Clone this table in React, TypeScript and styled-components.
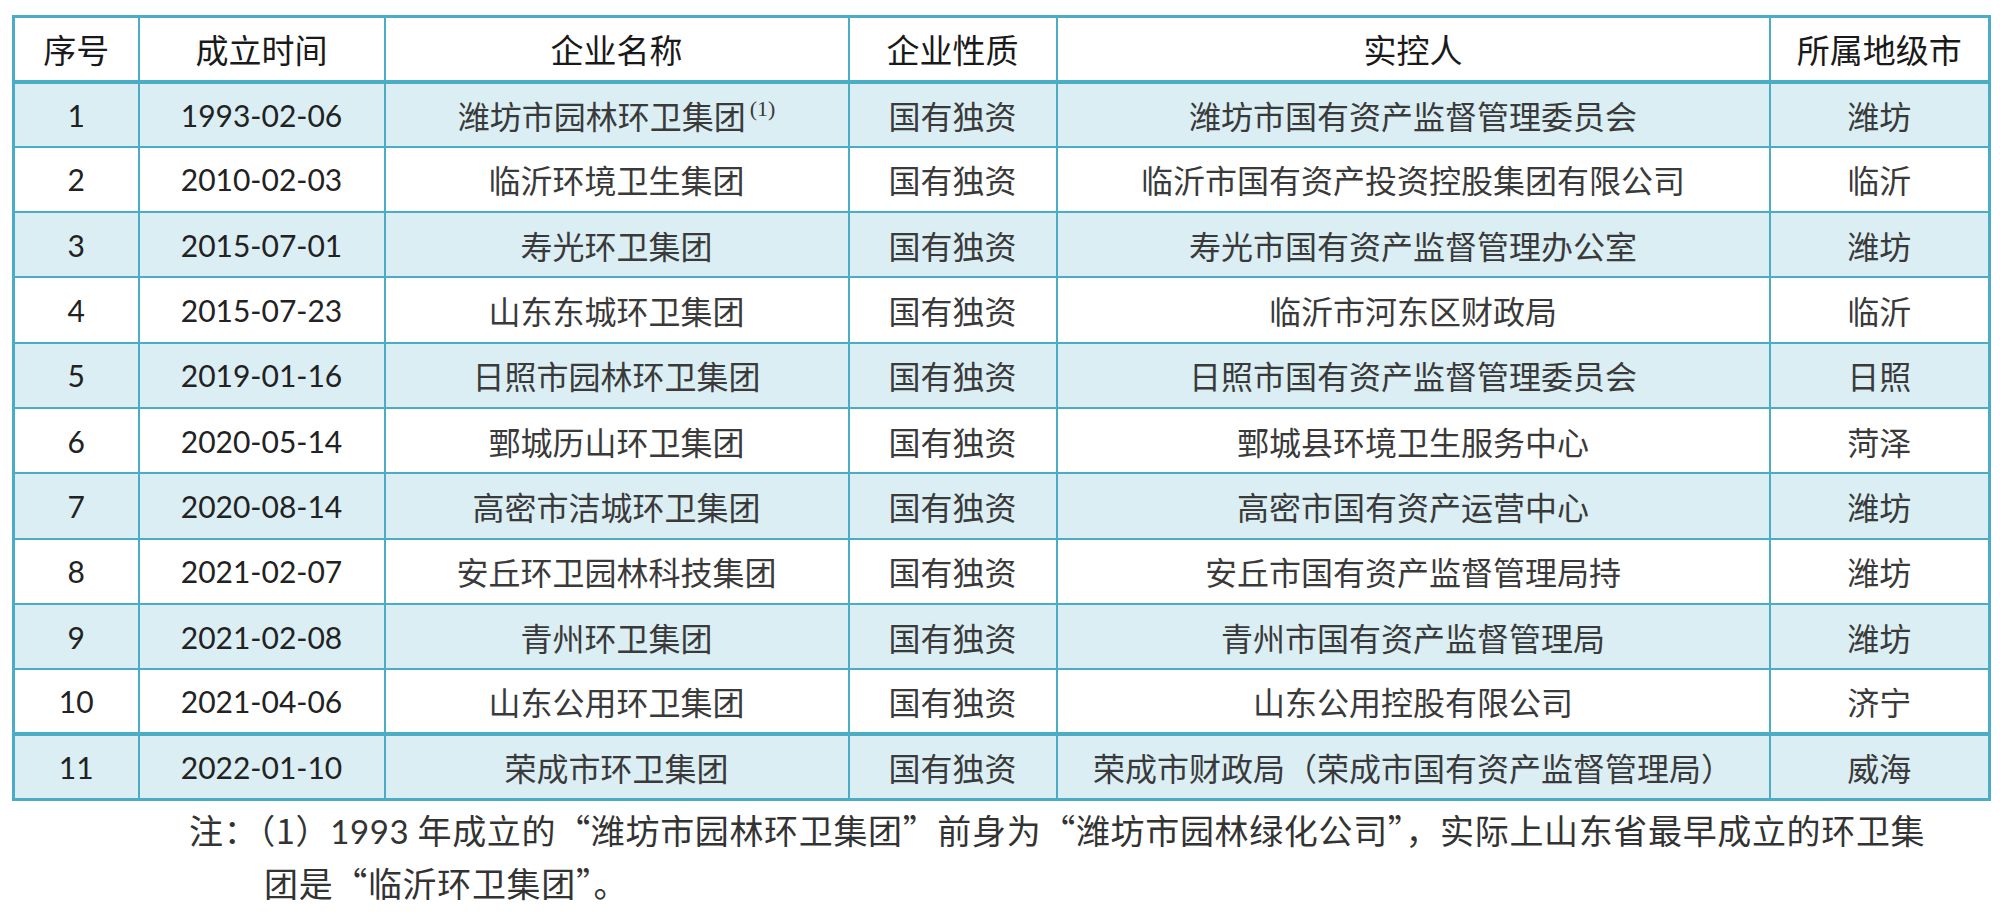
import React from 'react';
import styled, { createGlobalStyle } from 'styled-components';

const GlobalStyle = createGlobalStyle`
    body {
        margin: 0;
        background: #ffffff;
    }
`;

type Row = {
    no: string;
    date: string;
    name: string;
    note?: boolean;
    kind: string;
    owner: string;
    city: string;
};

const rows: Row[] = [
    { no: '1', date: '1993-02-06', name: '潍坊市园林环卫集团', note: true, kind: '国有独资', owner: '潍坊市国有资产监督管理委员会', city: '潍坊' },
    { no: '2', date: '2010-02-03', name: '临沂环境卫生集团', kind: '国有独资', owner: '临沂市国有资产投资控股集团有限公司', city: '临沂' },
    { no: '3', date: '2015-07-01', name: '寿光环卫集团', kind: '国有独资', owner: '寿光市国有资产监督管理办公室', city: '潍坊' },
    { no: '4', date: '2015-07-23', name: '山东东城环卫集团', kind: '国有独资', owner: '临沂市河东区财政局', city: '临沂' },
    { no: '5', date: '2019-01-16', name: '日照市园林环卫集团', kind: '国有独资', owner: '日照市国有资产监督管理委员会', city: '日照' },
    { no: '6', date: '2020-05-14', name: '鄄城历山环卫集团', kind: '国有独资', owner: '鄄城县环境卫生服务中心', city: '菏泽' },
    { no: '7', date: '2020-08-14', name: '高密市洁城环卫集团', kind: '国有独资', owner: '高密市国有资产运营中心', city: '潍坊' },
    { no: '8', date: '2021-02-07', name: '安丘环卫园林科技集团', kind: '国有独资', owner: '安丘市国有资产监督管理局持', city: '潍坊' },
    { no: '9', date: '2021-02-08', name: '青州环卫集团', kind: '国有独资', owner: '青州市国有资产监督管理局', city: '潍坊' },
    { no: '10', date: '2021-04-06', name: '山东公用环卫集团', kind: '国有独资', owner: '山东公用控股有限公司', city: '济宁' },
    { no: '11', date: '2022-01-10', name: '荣成市环卫集团', kind: '国有独资', owner: '荣成市财政局（荣成市国有资产监督管理局）', city: '威海' },
];

const widths = [125, 246, 464, 208, 713, 220];
const heads = ['序号', '成立时间', '企业名称', '企业性质', '实控人', '所属地级市'];

const App: React.FC = () => {
    return (
        <Page>
            <GlobalStyle />
            <Table>
                <colgroup>
                    {widths.map((w, i) => <col key={i} style={{ width: w }} />)}
                </colgroup>
                <thead>
                    <HeadRow>
                        {heads.map((h) => <HeadCell key={h}>{h}</HeadCell>)}
                    </HeadRow>
                </thead>
                <tbody>
                    {rows.map((r, i) => (
                        <BodyRow key={r.no} $shaded={i % 2 === 0} $thick={i === rows.length - 1}>
                            <NumCell>{r.no}</NumCell>
                            <NumCell>{r.date}</NumCell>
                            <Cell>
                                {r.name}
                                {r.note && <Sup>(1)</Sup>}
                            </Cell>
                            <Cell>{r.kind}</Cell>
                            <Cell>{r.owner}</Cell>
                            <Cell>{r.city}</Cell>
                        </BodyRow>
                    ))}
                </tbody>
            </Table>
            <Note>
                <NoteLine>
                    注：（1）<Digits>1993</Digits> 年成立的<Q>“</Q>潍坊市园林环卫集团<Q>”</Q>前身为<Q>“</Q>潍坊市园林绿化公司<Q>”</Q>，实际上山东省最早成立的环卫集
                </NoteLine>
                <NoteLine $indent>
                    团是<Q>“</Q>临沂环卫集团<Q>”</Q>。
                </NoteLine>
            </Note>
        </Page>
    );
};

const Page = styled.div`
    padding: 15px 0 0 12px;
    font-family: Lato, "Noto Sans CJK SC", sans-serif;
`;

const Table = styled.table`
    border-collapse: collapse;
    table-layout: fixed;
    width: 1976px;
    border: 3px solid #4bacc6;
`;

const HeadRow = styled.tr`
    height: 65px;
    background: #ffffff;
`;

const HeadCell = styled.th`
    border: 2px solid #4bacc6;
    border-bottom: 4px solid #4bacc6;
    padding: 0;
    font-family: "Noto Sans CJK SC", sans-serif;
    font-size: 33px;
    font-weight: 400;
    color: #1a1a1a;
    text-align: center;
    vertical-align: middle;
`;

const BodyRow = styled.tr<{ $shaded: boolean; $thick: boolean }>`
    height: 65.3px;
    background: ${({ $shaded }) => ($shaded ? '#daeef3' : '#ffffff')};
    td {
        border-top: ${({ $thick }) => ($thick ? '4px' : '2px')} solid #4bacc6;
    }
`;

const Cell = styled.td`
    border: 2px solid #4bacc6;
    padding: 0;
    font-family: "Noto Sans CJK SC", sans-serif;
    font-size: 32px;
    color: #3a3a3a;
    text-align: center;
    vertical-align: middle;
    white-space: nowrap;
`;

const NumCell = styled(Cell)`
    font-family: Lato, sans-serif;
    font-size: 30px;
    color: #222222;
`;

const Sup = styled.sup`
    font-family: "Liberation Serif", serif;
    font-size: 22px;
    margin-left: 4px;
    vertical-align: 13px;
    line-height: 0;
`;

const Note = styled.div`
    padding-top: 2px;
    font-family: "Noto Sans CJK SC", sans-serif;
    font-size: 34px;
    letter-spacing: 0.65px;
    color: #333333;
`;

const NoteLine = styled.div<{ $indent?: boolean }>`
    height: 53px;
    line-height: 53px;
    white-space: nowrap;
    padding-left: ${({ $indent }) => ($indent ? '252px' : '177px')};
`;

const Digits = styled.span`
    font-family: Lato, sans-serif;
    font-size: 33px;
`;

const Q = styled.span`
    font-family: "Noto Sans CJK SC", sans-serif;
`;

export default App;
